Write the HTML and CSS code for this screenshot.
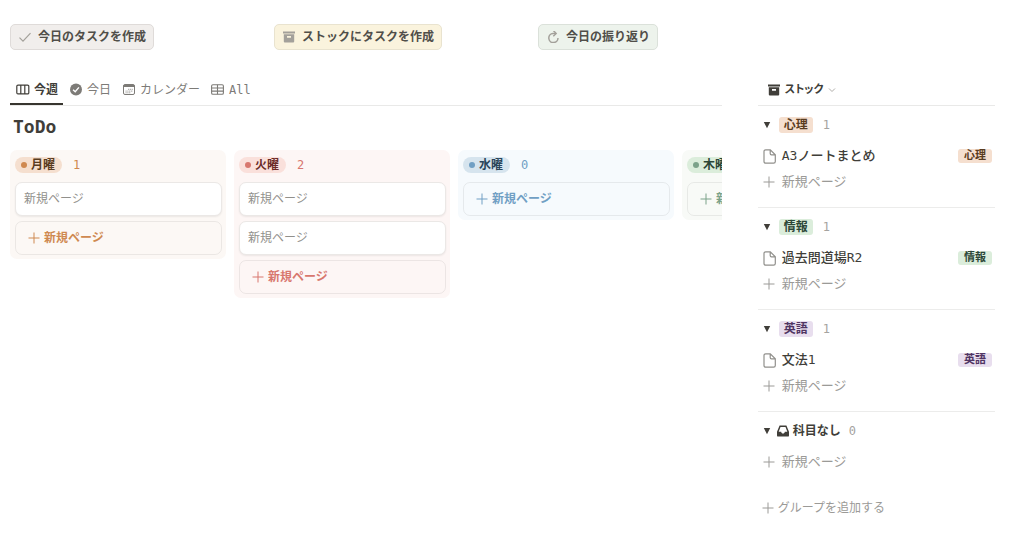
FILE: index.html
```html
<!DOCTYPE html>
<html lang="ja">
<head>
<meta charset="utf-8">
<meta name="viewport" content="width=device-width, initial-scale=1">
<title>ToDo</title>
<link rel="stylesheet" href="styles.css">
</head>
<body>
<svg class="defs" aria-hidden="true">
  <symbol id="plus" viewBox="0 0 12 12"><path d="M6 .5v11M.5 6h11" fill="none" stroke="currentColor" stroke-width="1"/></symbol>
  <symbol id="page" viewBox="0 0 13 15"><path d="M2.700 .8h4.600l5 5v6.700a1.700 1.700 0 0 1-1.700 1.700H2.700A1.700 1.700 0 0 1 1 12.500V2.500A1.700 1.700 0 0 1 2.700 .8zM7.200 1v3.600a1.300 1.300 0 0 0 1.300 1.300h3.600" fill="none" stroke="currentColor" stroke-width="1.200"/></symbol>
  <symbol id="box" viewBox="0 0 12 12"><path d="M0 .5h12v2H0zM.8 3.300h10.400v7.200a1 1 0 0 1-1 1H1.800a1 1 0 0 1-1-1zM4 5v1.800h4V5z" fill="currentColor" fill-rule="evenodd"/></symbol>
  <symbol id="tri" viewBox="0 0 8 8"><path d="M.8 1h6.400L4 7.200z" fill="currentColor"/></symbol>
</svg>
<div class="page">
  <div class="actions">
    <div><button class="action brown" type="button"><svg class="i12" viewBox="0 0 12 12"><path d="M.5 6.600 4 10.200 11.500 2.200" fill="none" stroke="currentColor" stroke-width="1.200"/></svg>今日のタスクを作成</button></div>
    <div><button class="action yellow" type="button"><svg class="i12"><use href="#box"/></svg>ストックにタスクを作成</button></div>
    <div><button class="action green" type="button"><svg class="i12" viewBox="0 0 12 12"><path d="M8.800 2.400H6A4.600 4.600 0 1 0 11 7" fill="none" stroke="currentColor" stroke-width="1.500"/><path d="M6.300 -.5 9.200 2.400 6.300 5.200" fill="none" stroke="currentColor" stroke-width="1.400"/></svg>今日の振り返り</button></div>
  </div>

  <div class="content">
    <main class="main">
      <nav class="tabs">
        <button class="tab active" type="button"><svg class="i14" viewBox="0 0 14 14"><path d="M2 2.100h9.600a1.200 1.200 0 0 1 1.200 1.200v6.400a1.200 1.200 0 0 1-1.200 1.200H2A1.200 1.200 0 0 1 .8 9.700V3.300A1.200 1.200 0 0 1 2 2.100zM4.800 2.100v8.800M8.800 2.100v8.800" fill="none" stroke="currentColor" stroke-width="1.200"/></svg>今週</button>
        <button class="tab" type="button"><svg class="i14" viewBox="0 0 14 14"><circle cx="7" cy="6.500" r="6" fill="currentColor"/><path d="M4.100 6.800 6.200 8.800 9.900 4.400" fill="none" stroke="#fff" stroke-width="1.400"/></svg>今日</button>
        <button class="tab" type="button"><svg class="i14" viewBox="0 0 14 14"><rect x="1.500" y="1.500" width="11" height="10" rx="1.500" fill="none" stroke="currentColor"/><path d="M1.500 2h11v2h-11z" fill="currentColor"/><path d="M6 6.300h5M3.500 8.100h7.500M3.500 9.800h5" stroke="currentColor" stroke-width="1" stroke-dasharray="1.200 .6" opacity=".7"/></svg>カレンダー</button>
        <button class="tab" type="button"><svg class="i14" viewBox="0 0 14 14"><rect x=".6" y="1.800" width="11.800" height="9.500" rx="1.300" fill="none" stroke="currentColor" stroke-width="1.100"/><path d="M.6 5h11.800M.6 8.100h11.800M6.500 1.800v9.500" stroke="currentColor" stroke-width="1.100"/></svg>All</button>
      </nav>
      <h1 class="title">ToDo</h1>
      <div class="board">
        <section class="column orange">
          <header class="column-head"><h2 class="pill">月曜</h2><span class="count">1</span></header>
          <a class="card" href="#">新規ページ</a>
          <button class="card add" type="button"><svg class="i12"><use href="#plus"/></svg>新規ページ</button>
        </section>
        <section class="column red">
          <header class="column-head"><h2 class="pill">火曜</h2><span class="count">2</span></header>
          <a class="card" href="#">新規ページ</a>
          <a class="card" href="#">新規ページ</a>
          <button class="card add" type="button"><svg class="i12"><use href="#plus"/></svg>新規ページ</button>
        </section>
        <section class="column blue">
          <header class="column-head"><h2 class="pill">水曜</h2><span class="count">0</span></header>
          <button class="card add" type="button"><svg class="i12"><use href="#plus"/></svg>新規ページ</button>
        </section>
        <section class="column leaf">
          <header class="column-head"><h2 class="pill">木曜</h2></header>
          <button class="card add" type="button"><svg class="i12"><use href="#plus"/></svg>新規ページ</button>
        </section>
      </div>
    </main>

    <aside class="stock">
      <button class="stock-head" type="button"><svg class="i12"><use href="#box"/></svg><span class="kana">ストック</span><svg class="i8 chevron" viewBox="0 0 8 8"><path d="M1 2.500l3 3 3-3" fill="none" stroke="currentColor"/></svg></button>
      <section class="group">
        <header class="group-head"><button class="toggle" type="button" aria-label="心理を閉じる"><svg class="i8"><use href="#tri"/></svg></button><span class="tag t-orange">心理</span><span class="num">1</span></header>
        <a class="row item" href="#"><svg class="doc"><use href="#page"/></svg><span class="name">A3ノートまとめ</span><span class="tag small t-orange">心理</span></a>
        <button class="row new" type="button"><svg class="i12"><use href="#plus"/></svg>新規ページ</button>
      </section>
      <section class="group">
        <header class="group-head"><button class="toggle" type="button" aria-label="情報を閉じる"><svg class="i8"><use href="#tri"/></svg></button><span class="tag t-green">情報</span><span class="num">1</span></header>
        <a class="row item" href="#"><svg class="doc"><use href="#page"/></svg><span class="name">過去問道場R2</span><span class="tag small t-green">情報</span></a>
        <button class="row new" type="button"><svg class="i12"><use href="#plus"/></svg>新規ページ</button>
      </section>
      <section class="group">
        <header class="group-head"><button class="toggle" type="button" aria-label="英語を閉じる"><svg class="i8"><use href="#tri"/></svg></button><span class="tag t-purple">英語</span><span class="num">1</span></header>
        <a class="row item" href="#"><svg class="doc"><use href="#page"/></svg><span class="name">文法1</span><span class="tag small t-purple">英語</span></a>
        <button class="row new" type="button"><svg class="i12"><use href="#plus"/></svg>新規ページ</button>
      </section>
      <section class="group last">
        <header class="group-head"><button class="toggle" type="button" aria-label="科目なしを閉じる"><svg class="i8"><use href="#tri"/></svg></button><span class="none"><svg class="i12" viewBox="0 0 12 12"><path d="M2.600 .6h6.800L12 6.800v3.600a1.200 1.200 0 0 1-1.200 1.200H1.200A1.200 1.200 0 0 1 0 10.400V6.800zM3.500 2 1.700 6.800h2.500c0 2.400 3.600 2.400 3.600 0h2.500L8.500 2z" fill="currentColor" fill-rule="evenodd"/></svg>科目なし</span><span class="num near">0</span></header>
        <button class="row new" type="button"><svg class="i12"><use href="#plus"/></svg>新規ページ</button>
      </section>
      <button class="add-group" type="button"><svg class="i12"><use href="#plus"/></svg>グループを追加する</button>
    </aside>
  </div>
</div>
</body>
</html>
```
FILE: styles.css
```css
* { box-sizing: border-box; }

body {
  margin: 0;
  background: #fff;
  color: #403e39;
  font: 12px/16px "DejaVu Sans Mono", "Noto Sans CJK JP", monospace;
}

h1, h2 { margin: 0; }
a { color: inherit; text-decoration: none; }

button {
  margin: 0;
  padding: 0;
  border: 0;
  background: none;
  color: inherit;
  font: inherit;
  text-align: left;
  white-space: nowrap;
  cursor: pointer;
}

svg { flex: none; display: block; }
.defs { display: none; }
.i8 { width: 8px; height: 8px; }
.i12 { width: 12px; height: 12px; }
.i14 { width: 14px; height: 14px; }

.page { padding: 24px 29px 16px 10px; }

.actions {
  display: grid;
  grid-template-columns: repeat(4, 1fr);
  column-gap: 71px;
}

.action {
  display: flex;
  align-items: center;
  gap: 7px;
  height: 26px;
  padding: 0 7px 0 8px;
  border: 1px solid;
  border-radius: 5px;
  font-weight: 700;
  color: #504e49;
}
.action svg { color: #a3a09a; }
.brown { background: #f1eeec; border-color: #dfdbd9; }
.yellow { background: #faf3dd; border-color: #e9e3cf; }
.green { background: #edf3ec; border-color: #dbe1da; }

.content {
  display: grid;
  grid-template-columns: minmax(0, 3fr) minmax(0, 1fr);
  column-gap: 36px;
  margin-top: 25px;
}

.tabs {
  display: flex;
  height: 31px;
  border-bottom: 1px solid #e9e9e8;
}
.tab {
  display: flex;
  align-items: center;
  gap: 4px;
  height: 30px;
  padding: 2px 5px 0 6px;
  border-bottom: 2px solid transparent;
  color: #7d7b77;
}
.tab.active {
  border-color: #37352f;
  color: #403e39;
  font-weight: 700;
}

.title {
  padding: 9px 3px 12px;
  font-size: 18px;
  line-height: 23px;
}

.board {
  display: flex;
  align-items: flex-start;
  gap: 8px;
  overflow: hidden;
}
.column {
  display: flex;
  flex: none;
  flex-direction: column;
  gap: 5px;
  width: 216px;
  padding: 7px 4px 4px 5px;
  border-radius: 7px;
  background: var(--bg);
}
.column-head {
  display: flex;
  align-items: center;
  gap: 11px;
  margin-bottom: 4px;
  color: var(--accent);
}
.pill {
  display: flex;
  align-items: center;
  gap: 4px;
  height: 16px;
  padding: 0 7px 0 6px;
  border-radius: 8px;
  background: var(--pill);
  color: var(--ink);
  font-size: 12px;
  font-weight: 700;
}
.pill::before {
  content: "";
  width: 6px;
  height: 6px;
  border-radius: 50%;
  background: var(--accent);
}
.card {
  display: flex;
  align-items: center;
  height: 34px;
  padding: 0 8px;
  border: 1px solid #ebe8e6;
  border-radius: 7px;
  background: #fff;
  box-shadow: 0 1px 2px #0f0f0f12;
  color: #91908c;
}
.card.add {
  gap: 4px;
  padding: 0 12px;
  border-color: #0f0f0f12;
  background: none;
  box-shadow: none;
  color: var(--accent);
  font-weight: 700;
}
.orange { --bg: #fcf8f5; --pill: #f5dfcf; --accent: #cf8950; --ink: #5a3c20; }
.red { --bg: #fdf6f5; --pill: #fae0db; --accent: #d8776e; --ink: #6b2b28; }
.blue { --bg: #f6fafd; --pill: #d6e4ee; --accent: #709fc4; --ink: #2a4559; }
.leaf { --bg: #f8faf7; --pill: #dbeddb; --accent: #7ba289; --ink: #2c4637; }

.stock-head {
  display: flex;
  align-items: center;
  gap: 5px;
  width: 100%;
  height: 31px;
  padding: 0 10px;
  border-bottom: 1px solid #e9e9e8;
  font-weight: 700;
}
.kana { font-size: 11px; font-feature-settings: "palt"; }
.chevron { color: #b0aeaa; }

.group {
  padding: 7px 0 13px;
  border-bottom: 1px solid #ececeb;
}
.group.last { padding-bottom: 20px; border-bottom: 0; }
.group-head {
  display: flex;
  align-items: center;
  height: 24px;
  margin-bottom: 6px;
  padding-left: 5px;
}
.toggle { margin-right: 8px; }
.tag {
  padding: 0 5px;
  border-radius: 3px;
  font-weight: 700;
}
.tag.small {
  padding: 0 6px;
  font-size: 11px;
  line-height: 14px;
}
.t-orange { background: #f5dfcf; color: #5a3c20; }
.t-green { background: #dbeddb; color: #2c4637; }
.t-purple { background: #e8deee; color: #503563; }
.num { margin-left: 10px; color: #a5a39f; }
.num.near { margin-left: 8px; }
.none {
  display: flex;
  align-items: center;
  gap: 4px;
  margin-left: -2px;
  font-weight: 700;
}

.row {
  display: flex;
  align-items: center;
  gap: 7px;
  width: 100%;
  height: 26px;
  padding: 0 3px 0 5px;
  font-size: 13px;
}
.doc { width: 13px; height: 15px; color: #91908c; }
.item { font-weight: 500; gap: 6px; }
.name { flex: 1; }
.row.new { height: 25px; color: #9b9a97; }
.add-group {
  display: flex;
  align-items: center;
  gap: 4px;
  height: 28px;
  padding-left: 4px;
  color: #9b9a97;
}
```
